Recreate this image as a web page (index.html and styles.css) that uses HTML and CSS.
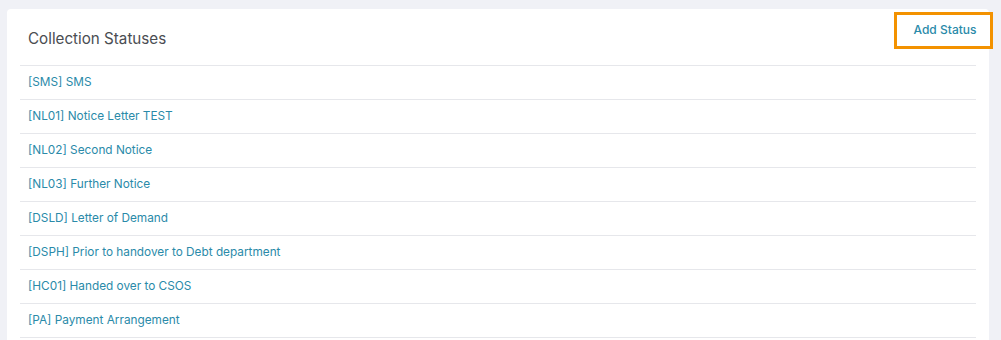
FILE: index.html
```html
<!DOCTYPE html>
<html>
<head>
<meta charset="utf-8">
<link rel="stylesheet" href="styles.css">
</head>
<body>
<div class="page">
  <div class="card">
    <div class="card-header">
      <h2 class="title">Collection Statuses</h2>
      <button class="add-btn">Add Status</button>
    </div>
    <ul class="list">
      <li><a href="#">[SMS] SMS</a></li>
      <li><a href="#">[NL01] Notice Letter TEST</a></li>
      <li><a href="#">[NL02] Second Notice</a></li>
      <li><a href="#">[NL03] Further Notice</a></li>
      <li><a href="#">[DSLD] Letter of Demand</a></li>
      <li><a href="#">[DSPH] Prior to handover to Debt department</a></li>
      <li><a href="#">[HC01] Handed over to CSOS</a></li>
      <li><a href="#">[PA] Payment Arrangement</a></li>
    </ul>
  </div>
</div>
</body>
</html>
```

FILE: styles.css
```css
html, body {
  margin: 0;
  padding: 0;
  background: #f0f1f6;
  font-family: Inter, "Noto Sans", sans-serif;
  height: 340px;
  overflow: hidden;
}
.page {
  padding: 9px 12px 0 7px;
}
.card {
  position: relative;
  background: #fff;
  border-radius: 4px;
  padding: 0 13px;
  height: 400px;
}
.card-header {
  height: 56px;
  display: flex;
  align-items: center;
  border-bottom: 1px solid #e6e7eb;
}
.title {
  margin: 0 0 0 8px;
  padding-top: 3px;
  font-size: 15.2px;
  font-weight: 400;
  color: #4a4d52;
}
.add-btn {
  position: absolute;
  left: 887px;
  top: 3px;
  width: 99px;
  height: 37px;
  border: 3px solid #f39200;
  background: #fff;
  color: #2a8aa9;
  font-family: inherit;
  font-size: 12px;
  font-weight: 500;
  padding: 0 0 2px 3px;
  margin: 0;
  cursor: pointer;
}
.list {
  list-style: none;
  margin: 0;
  padding: 0;
}
.list li {
  height: 33px;
  border-bottom: 1px solid #e6e7eb;
  display: flex;
  align-items: center;
  padding-left: 8px;
  padding-bottom: 1px;
  box-sizing: border-box;
  height: 34px;
}
.list a {
  color: #2a8aa9;
  font-size: 11.8px;
  text-decoration: none;
}
```
